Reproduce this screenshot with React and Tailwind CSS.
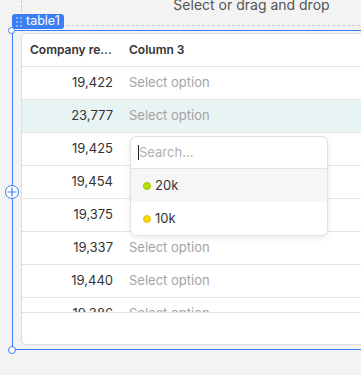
const rows = [
  { value: "19,422" },
  { value: "23,777", active: true },
  { value: "19,425" },
  { value: "19,454" },
  { value: "19,375" },
  { value: "19,337" },
  { value: "19,440" },
  { value: "19,386" },
];

const options = [
  { label: "20k", color: "bg-[#b8e10a]", ring: "border-[#9cc000]", hover: true },
  { label: "10k", color: "bg-[#f7d90a]", ring: "border-[#e0c000]" },
];

function DragDots() {
  return (
    <svg width="6" height="10" viewBox="0 0 6 10" className="opacity-60">
      {[1, 5, 9].map((y) =>
        [1, 5].map((x) => <circle key={`${x}-${y}`} cx={x} cy={y} r="0.9" fill="white" />)
      )}
    </svg>
  );
}

export default function App() {
  return (
    <div
      className="relative h-[375px] w-[361px] overflow-hidden bg-[#f3f3f3] text-[13px] text-[#333]"
      style={{ fontFamily: "Inter, 'Noto Sans', sans-serif" }}
    >
      {/* previous component (drop zone) */}
      <div className="ml-[21px] flex h-[26px] w-[460px] items-start justify-center border-b border-l border-dashed border-[#c9c9c9]">
        <span className="-mt-[6px] text-[14px] text-[#555]">Select or drag and drop</span>
      </div>

      {/* selected table */}
      <div className="ml-[12px] mt-[4px] w-[400px] border-b border-l border-t border-[#3a7ef4] pb-[4px] pl-[8px] pt-[2px]">
        <div className="flex h-[312px] flex-col overflow-hidden rounded-[5px] border border-[#dedede] bg-white">
          <div className="flex h-[33px] shrink-0 items-center border-b border-[#e3e3e3] text-[12px] font-semibold">
            <div className="w-[99px] shrink-0 whitespace-nowrap pl-[8px]">Company re...</div>
            <div className="pl-[8px]">Column 3</div>
          </div>
          <div className="h-[246px] shrink-0 overflow-hidden border-b border-[#e3e3e3]">
            {rows.map((r) => (
              <div
                key={r.value}
                className={`flex h-[33px] items-center border-b border-[#e3e3e3] ${r.active ? "bg-[#e8f3f4]" : ""}`}
              >
                <div className="w-[99px] shrink-0 pr-[8px] text-right">{r.value}</div>
                <div className="pl-[8px] text-[#a3a3a3]">Select option</div>
              </div>
            ))}
          </div>
        </div>
      </div>

      {/* name badge */}
      <div className="absolute left-[12px] top-[14px] flex h-[15px] items-center gap-[4px] rounded-[3px] bg-[#3a7ef4] pl-[4px] pr-[4px] text-[12.5px] leading-none text-white">
        <DragDots />
        <span>table1</span>
      </div>

      {/* resize handles */}
      <div className="absolute left-[8px] top-[27px] h-[7px] w-[7px] rounded-full border border-[#3a7ef4] bg-white" />
      <div className="absolute left-[8px] top-[346px] h-[8px] w-[8px] rounded-full border border-[#3a7ef4] bg-white" />
      <div className="absolute left-[5px] top-[185px] flex h-[14px] w-[14px] items-center justify-center rounded-full border border-[#3a7ef4] bg-white">
        <svg width="10" height="10" viewBox="0 0 10 10">
          <path d="M5 0.5v9M0.5 5h9" stroke="#3a7ef4" strokeWidth="1.2" />
        </svg>
      </div>

      {/* select dropdown */}
      <div className="absolute left-[130px] top-[136px] w-[198px] overflow-hidden rounded-[6px] border border-[#e0e0e0] bg-white shadow-[0_2px_6px_rgba(0,0,0,0.08)]">
        <div className="flex h-[32px] items-center border-b border-[#e3e3e3] pl-[7px]">
          <span className="h-[15px] w-px bg-[#222]" />
          <span className="text-[#b0b0b0]">Search...</span>
        </div>
        {options.map((o) => (
          <div
            key={o.label}
            className={`flex h-[33px] items-center gap-[4px] pl-[12px] ${o.hover ? "bg-[#f6f6f6]" : ""}`}
          >
            <span className={`h-[8px] w-[8px] rounded-full border ${o.color} ${o.ring}`} />
            <span>{o.label}</span>
          </div>
        ))}
      </div>
    </div>
  );
}
